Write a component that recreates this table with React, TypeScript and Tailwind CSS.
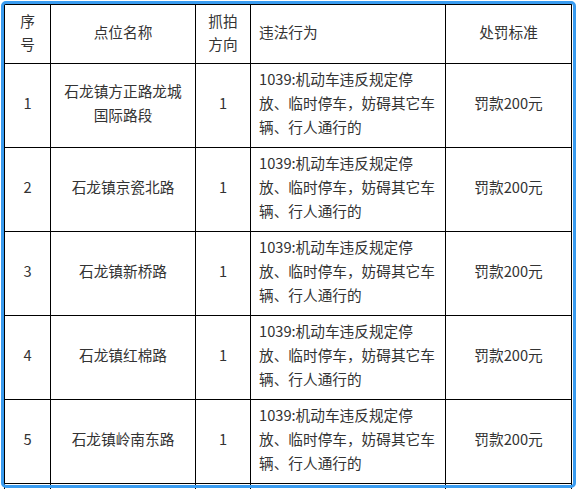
import React from "react";

const rows = [
  { no: "1", name: ["石龙镇方正路龙城", "国际路段"] },
  { no: "2", name: ["石龙镇京瓷北路"] },
  { no: "3", name: ["石龙镇新桥路"] },
  { no: "4", name: ["石龙镇红棉路"] },
  { no: "5", name: ["石龙镇岭南东路"] },
];

const desc = ["1039:机动车违反规定停", "放、临时停车，妨碍其它车", "辆、行人通行的"];

function Cell({ children, left = false, header = false }: { children?: React.ReactNode; left?: boolean; header?: boolean }) {
  return (
    <div
      className={`bg-white flex flex-col justify-center pb-[5px] ${left ? "items-start pl-[8px]" : "items-center text-center"} ${
        header ? "leading-[23px]" : "leading-[24px]"
      }`}
    >
      {children}
    </div>
  );
}

function Lines({ lines }: { lines: string[] }) {
  return (
    <>
      {lines.map((l, i) => (
        <span key={i} className="block whitespace-nowrap">
          {l}
        </span>
      ))}
    </>
  );
}

export default function App() {
  return (
    <div
      className="relative w-[576px] h-[489px] overflow-hidden bg-white text-[#333] text-[14.67px]"
      style={{ fontFamily: '"Noto Sans CJK SC", "Microsoft YaHei", sans-serif' }}
    >
      <div className="ml-[4px] mt-[4px] w-[568px] bg-black p-px grid gap-px grid-cols-[45px_144px_54px_194px_125px] grid-rows-[58px_83px_83px_83px_83px_83px_40px]">
        <Cell header>
          <Lines lines={["序", "号"]} />
        </Cell>
        <Cell header>点位名称</Cell>
        <Cell header>
          <Lines lines={["抓拍", "方向"]} />
        </Cell>
        <Cell header left>
          违法行为
        </Cell>
        <Cell header>处罚标准</Cell>
        {rows.map((r) => (
          <React.Fragment key={r.no}>
            <Cell>{r.no}</Cell>
            <Cell>
              <Lines lines={r.name} />
            </Cell>
            <Cell>1</Cell>
            <Cell left>
              <Lines lines={desc} />
            </Cell>
            <Cell>罚款200元</Cell>
          </React.Fragment>
        ))}
        <Cell />
        <Cell />
        <Cell />
        <Cell />
        <Cell />
      </div>
      <div className="pointer-events-none absolute left-[1px] top-[1px] w-[575px] h-[487px] border-[3px] border-[#3a9cf0] rounded-[5px]" />
    </div>
  );
}
